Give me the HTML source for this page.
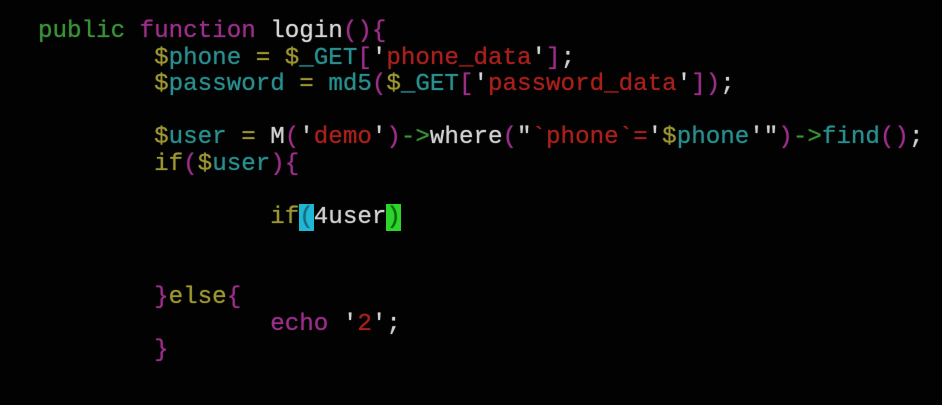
<!DOCTYPE html>
<html><head><style>
html,body{margin:0;padding:0;background:#020202;width:942px;height:405px;overflow:hidden}
pre{margin:0;position:absolute;left:38px;top:19px;font-family:"Liberation Mono",monospace;font-size:24.2px;line-height:26.6px;color:#d0d0d0;text-shadow:0 0 1px currentColor}
.g{color:#3a9238}.m{color:#9a2e88}.y{color:#9c9632}.t{color:#288e8e}.r{color:#a8201c}.w{color:#d4d4d4}
.cb{background:#1fb8d4;color:#1a6a80}.gb{background:#2dd42d;color:#0a6a0a}
</style></head><body>
<pre><span class="g">public</span> <span class="m">function</span> <span class="w">login</span><span class="m">(){</span>
        <span class="y">$</span><span class="t">phone</span> <span class="y">=</span> <span class="y">$</span><span class="t">_GET</span><span class="m">[</span><span class="w">'</span><span class="r">phone_data</span><span class="w">'</span><span class="m">]</span>;
        <span class="y">$</span><span class="t">password</span> <span class="y">=</span> <span class="t">md5</span><span class="m">(</span><span class="y">$</span><span class="t">_GET</span><span class="m">[</span><span class="w">'</span><span class="r">password_data</span><span class="w">'</span><span class="m">])</span>;

        <span class="y">$</span><span class="t">user</span> <span class="y">=</span> M<span class="m">(</span>'<span class="r">demo</span>'<span class="m">)</span><span class="g">-&gt;</span>where<span class="m">(</span>"<span class="r">`phone`=</span>'<span class="y">$</span><span class="t">phone</span>'"<span class="m">)</span><span class="g">-&gt;</span><span class="t">find</span><span class="m">()</span>;
        <span class="y">if</span><span class="m">(</span><span class="y">$</span><span class="t">user</span><span class="m">){</span>

                <span class="y">if</span><span class="cb">(</span>4user<span class="gb">)</span>


        <span class="m">}</span><span class="y">else</span><span class="m">{</span>
                <span class="m">echo</span> '<span class="r">2</span>';
        <span class="m">}</span></pre>
</body></html>
